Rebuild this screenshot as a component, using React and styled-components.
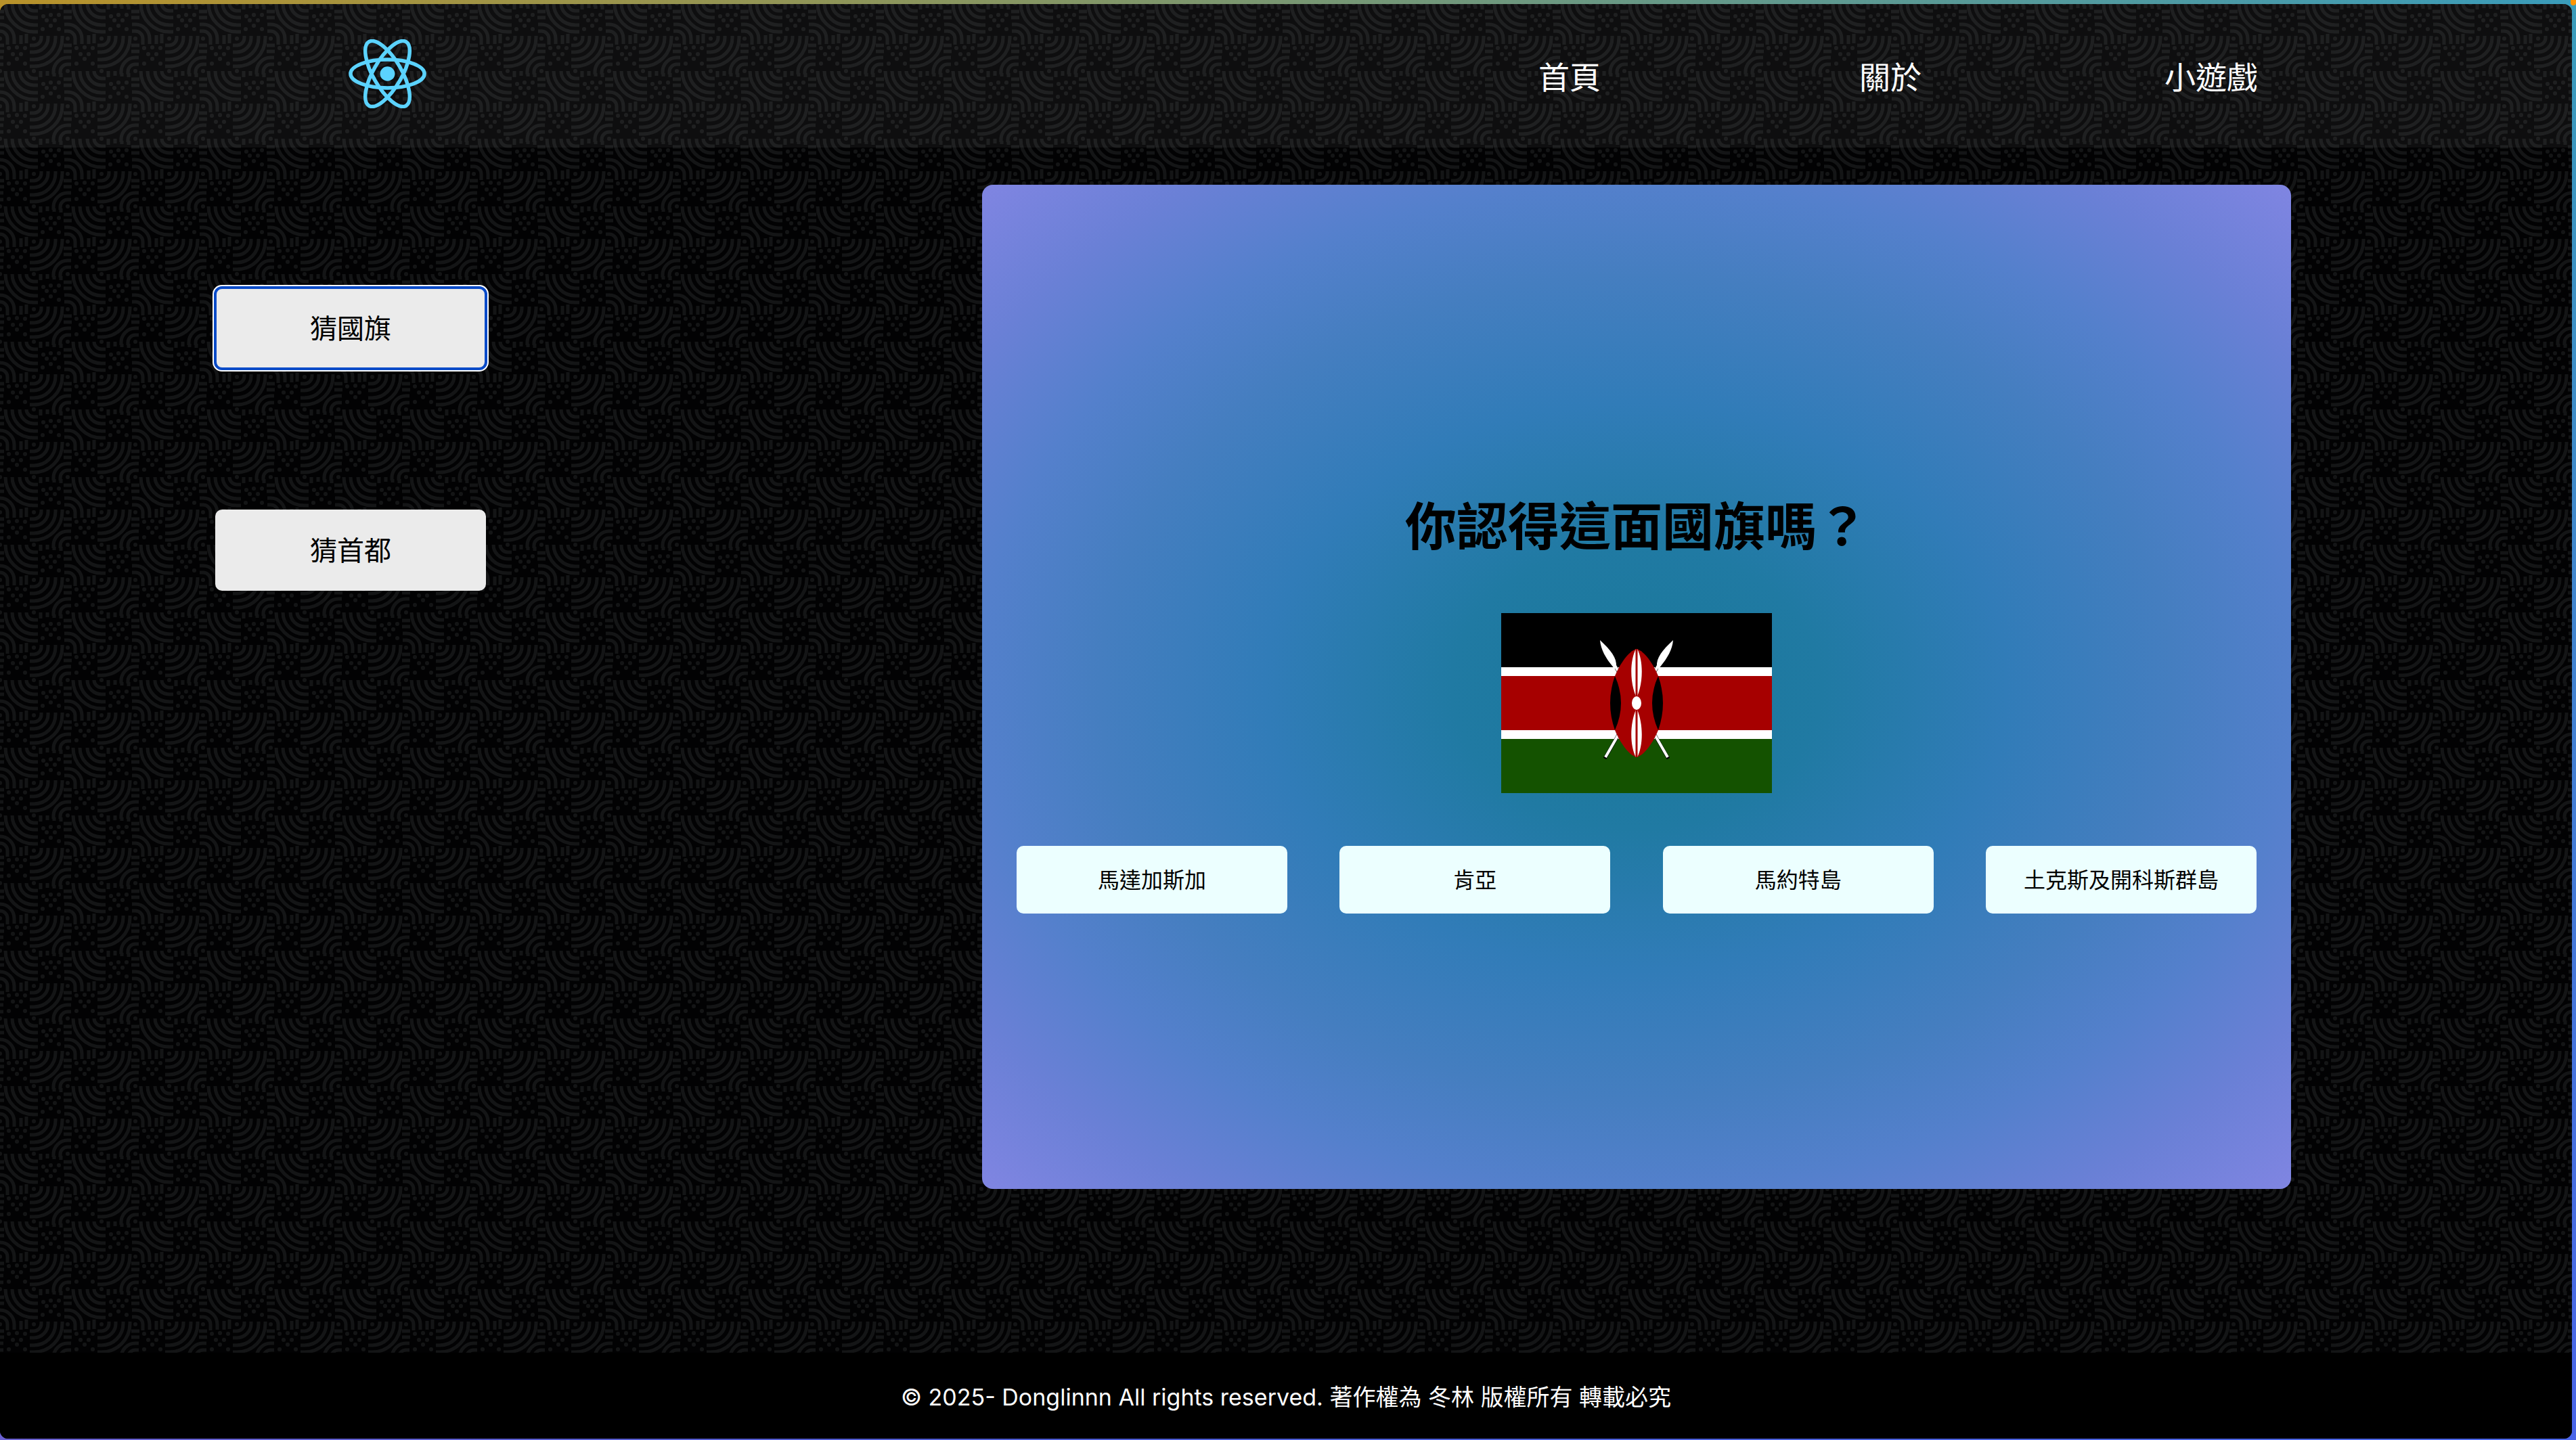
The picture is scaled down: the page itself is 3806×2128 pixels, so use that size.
import React from 'react';
import styled, { createGlobalStyle } from 'styled-components';

const sans = `Inter, "Noto Sans CJK TC", sans-serif`;

const GlobalStyle = createGlobalStyle`
  * { box-sizing: border-box; }
  body {
    margin: 0;
    font-family: ${sans};
    background:
      linear-gradient(90deg, #b8922a, #3a9cba) top / 100% 16px no-repeat,
      linear-gradient(90deg, #6a5fd0, #4a58d0 40%, #4a65e8) bottom / 100% 16px no-repeat,
      linear-gradient(#3a9cba, #4a65e8);
  }
`;

const Frame = styled.div`
  position: relative;
  min-height: 100vh;
  padding: 6px 6px 2px 0;
  display: flex;
`;

const Corner = styled.span`
  position: absolute;
  top: 0;
  right: 0;
  width: 8px;
  height: 8px;
  border-radius: 0 0 4px 4px;
  background: #ff9500;
`;

const Page = styled.div`
  position: relative;
  isolation: isolate;
  flex: 1;
  display: flex;
  flex-direction: column;
  border-radius: 12px;
  overflow: hidden;
  background: #020203;
`;

const Backdrop = styled.svg`
  position: absolute;
  inset: -6px 0 0 0;
  width: 100%;
  height: calc(100% + 6px);
  z-index: -1;
`;

const Header = styled.header`
  height: 212px;
  display: flex;
  align-items: center;
  padding: 0 296px 0 515px;
  background: rgba(255, 255, 255, 0.05);
`;

const LogoLink = styled.a`
  display: flex;
  margin-right: auto;
  padding-bottom: 6px;
`;

const Nav = styled.nav`
  display: grid;
  grid-template-columns: repeat(3, 474px);
`;

const NavLink = styled.a`
  color: #fff;
  font-size: 46px;
  line-height: 68px;
  padding-top: 4px;
  text-align: center;
  text-decoration: none;
`;

const Main = styled.main`
  flex: 1;
  display: flex;
  align-items: flex-start;
  padding: 55px 415px 0 318px;
`;

const Menu = styled.div`
  display: flex;
  flex-direction: column;
  gap: 208px;
  margin: 152px auto 0 0;
`;

const Button = styled.button`
  width: 400px;
  padding: 0 0 4px;
  border: 0;
  border-radius: 10px;
  color: #000;
  font-family: ${sans};
`;

const MenuButton = styled(Button)`
  height: 120px;
  background: #ebebeb;
  font-size: 40px;
  &:focus {
    outline: 4px solid #0a4bc8;
    outline-offset: -2px;
    box-shadow: 0 0 0 4px #fff;
  }
`;

const Quiz = styled.section`
  width: 1934px;
  height: 1484px;
  padding: 46px 51px 0;
  display: flex;
  flex-direction: column;
  align-items: center;
  justify-content: center;
  border-radius: 16px;
  background: radial-gradient(
    #1a789a,
    #207aa3 20%,
    #317cb8 40%,
    #457ec0 58%,
    #5480cc 71%,
    #6a80d6 85%,
    #8085e2
  );
`;

const Question = styled.h1`
  margin: 0 0 76px;
  font-size: 76px;
  line-height: 104px;
  font-weight: 700;
`;

const Options = styled.div`
  align-self: stretch;
  margin-top: 78px;
  display: flex;
  justify-content: space-between;
`;

const Option = styled(Button)`
  height: 100px;
  background: #ecffff;
  font-size: 32px;
`;

const Footer = styled.footer`
  height: 127px;
  display: flex;
  align-items: center;
  justify-content: center;
  background: #000;
  color: #fff;
  font-size: 34px;
`;

const rings = [11, 21, 32, 42];
const dots = [
  [75, 22], [64, 24], [87, 22], [69, 30], [81, 30], [75, 38], [63, 43], [87, 43],
  [13, 71], [25, 70], [37, 71], [19, 80], [31, 80], [25, 87], [13, 94], [37, 94],
  [50, 5], [50, 57], [100, 57], [100, 5],
];

function Arcs() {
  return (
    <g>
      {rings.map((r) => (
        <path key={`a${r}`} d={`M${50 - r} 5A${r} ${r} 0 0 0 50 ${5 + r}`} />
      ))}
      {rings.map((r) => (
        <path key={`b${r}`} d={`M${50 + r} 53V56A${r} ${r} 0 0 1 50 ${56 + r}H44`} />
      ))}
      {rings.slice(0, 2).map((r) => (
        <g key={`c${r}`}>
          <path d={`M-5 ${57 - r}H0A${r} ${r} 0 0 1 ${r} 57V62`} />
          <path d={`M${100 - r} 110V106A${r} ${r} 0 0 1 100 ${106 - r}H105`} />
        </g>
      ))}
      <path d="M11 62v4M21 62v3M31 52v13M39 50v14M60 5v9M70 5v7M80 8v5M90 8v6" />
      <path d="M50 16h6M50 26h6M50 37h6M50 47h6M94 17h12M94 26h12M94 67h12M94 76h12" />
      {dots.map(([x, y]) => (
        <circle key={`${x}-${y}`} cx={x} cy={y} r="3" fill="#141516" stroke="none" />
      ))}
    </g>
  );
}

function Pattern() {
  return (
    <Backdrop aria-hidden="true">
      <defs>
        <pattern id="arcs" width="100" height="100" patternUnits="userSpaceOnUse">
          <g fill="none" stroke="#141516" strokeWidth="5">
            {[[0, 0], [-100, 0], [100, 0], [0, -100], [100, -100], [-100, -100]].map(([x, y]) => (
              <g key={`${x},${y}`} transform={`translate(${x} ${y})`}><Arcs /></g>
            ))}
          </g>
        </pattern>
      </defs>
      <rect width="100%" height="100%" fill="url(#arcs)" />
    </Backdrop>
  );
}

function Logo() {
  return (
    <svg width="115" height="102" viewBox="-11.5 -10.23 23 20.46" role="img" aria-label="React">
      <ellipse rx="2.2" ry="2.15" fill="#5bd3ff" />
      <g fill="none" stroke="#5bd3ff" strokeWidth="1.1">
        <ellipse rx="10.95" ry="4.2" />
        <ellipse rx="10.95" ry="4.2" transform="rotate(60)" />
        <ellipse rx="10.95" ry="4.2" transform="rotate(120)" />
      </g>
    </svg>
  );
}

function Spear() {
  return (
    <>
      <path d="M153 215L234 74" stroke="#000" strokeWidth="5" />
      <path d="M154 213L234 74" stroke="#fff" strokeWidth="4" />
      <path fill="#fff" d="M254 40C253 54 245 67 236 78L232 83L230 79C229 66 238 55 254 40Z" />
    </>
  );
}

function Flag() {
  return (
    <svg width="400" height="266" viewBox="0 0 400 266" role="img" aria-label="肯亞國旗">
      <path fill="#fff" d="M0 0h400v266H0z" />
      <path d="M0 0h400v80H0z" />
      <path fill="#a60000" d="M0 93h400v80H0z" />
      <path fill="#145200" d="M0 186h400v80H0z" />
      <Spear />
      <g transform="matrix(-1 0 0 1 400 0)"><Spear /></g>
      <path fill="#a60000" d="M200 53C188 56 175 76 168 93V173C175 190 188 210 200 213C212 210 225 190 232 173V93C225 76 212 56 200 53Z" />
      <path d="M168 93Q154 133 168 173Q186 133 168 93ZM232 93Q246 133 232 173Q214 133 232 93Z" />
      <path fill="#fff" d="M199 53C190 70 190 102 199 123H201C210 102 210 70 201 53ZM199 143C190 164 190 196 199 213H201C210 196 210 164 201 143Z" />
      <path stroke="#a60000" strokeWidth="3" d="M200 53V213" />
      <ellipse cx="200" cy="133" rx="7" ry="10" fill="#fff" />
    </svg>
  );
}

const links = ['首頁', '關於', '小遊戲'];
const options = ['馬達加斯加', '肯亞', '馬約特島', '土克斯及開科斯群島'];

export default function App() {
  return (
    <>
      <GlobalStyle />
      <Frame>
        <Page>
          <Pattern />
          <Header>
            <LogoLink href="#"><Logo /></LogoLink>
            <Nav>
              {links.map((label) => <NavLink key={label} href="#">{label}</NavLink>)}
            </Nav>
          </Header>
          <Main>
            <Menu>
              <MenuButton autoFocus>猜國旗</MenuButton>
              <MenuButton>猜首都</MenuButton>
            </Menu>
            <Quiz>
              <Question>你認得這面國旗嗎？</Question>
              <Flag />
              <Options>{options.map((name) => <Option key={name}>{name}</Option>)}</Options>
            </Quiz>
          </Main>
          <Footer>© 2025- Donglinnn All rights reserved. 著作權為 冬林 版權所有 轉載必究</Footer>
        </Page>
        <Corner />
      </Frame>
    </>
  );
}
